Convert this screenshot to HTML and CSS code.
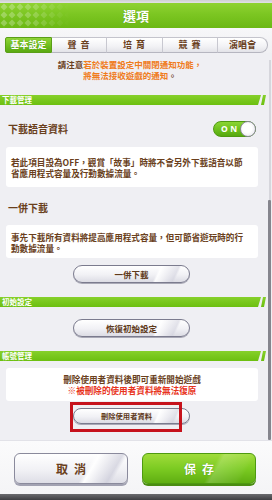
FILE: index.html
```
<!DOCTYPE html>
<html lang="zh-Hant">
<head>
<meta charset="utf-8">
<link rel="stylesheet" href="styles.css">
</head>
<body>
<div class="screen">
  <div class="topstrip"></div>
  <header class="header">
    <svg class="pattern" width="70" height="25" viewBox="0 0 70 25">
      <defs>
        <pattern id="dia" width="8" height="8" patternUnits="userSpaceOnUse">
          <path d="M4 0.5L7.5 4L4 7.5L0.5 4Z" fill="#ffffff" fill-opacity="0.28"/>
        </pattern>
        <linearGradient id="fade" x1="0" x2="1" y1="0" y2="0">
          <stop offset="0" stop-color="#fff"/>
          <stop offset="0.45" stop-color="#fff" stop-opacity="0.8"/>
          <stop offset="1" stop-color="#fff" stop-opacity="0"/>
        </linearGradient>
        <mask id="m">
          <rect width="70" height="25" fill="url(#fade)"/>
        </mask>
      </defs>
      <rect width="70" height="25" fill="url(#dia)" mask="url(#m)"/>
    </svg>
    <h1 class="title">選項</h1>
  </header>
  <div class="tabbar">
    <nav class="tabs">
      <div class="tab tab-active">基本設定</div>
      <div class="tab tab-w1">聲 音</div>
      <div class="tab tab-w2">培 育</div>
      <div class="tab tab-w1">競 賽</div>
      <div class="tab tab-last">演唱會</div>
    </nav>
  </div>
  <main class="content">
    <div class="scroll">
      <p class="notice"><span class="brown">請注意</span>若於裝置設定中關閉通知功能，<br>將無法接收遊戲的通知<span class="brown">。</span></p>

      <div class="bar bar-first"><div class="bar-label">下載管理</div><div class="bar-tick"></div></div>

      <div class="row">
        <div class="heading">下載語音資料</div>
        <div class="toggle"><span class="toggle-text">ON</span><span class="knob"></span></div>
      </div>
      <div class="box box-1">若此項目設為OFF，觀賞「故事」時將不會另外下載語音以節<br>省應用程式容量及行動數據流量。</div>

      <div class="heading heading-2">一併下載</div>
      <div class="box box-2">事先下載所有資料將提高應用程式容量，但可節省遊玩時的行<br>動數據流量。</div>
      <div class="btn btn-1">一併下載</div>

      <div class="bar bar-2"><div class="bar-label">初始設定</div><div class="bar-tick"></div></div>
      <div class="btn btn-2">恢復初始設定</div>

      <div class="bar bar-3"><div class="bar-label">帳號管理</div><div class="bar-tick"></div></div>
      <div class="box box-3"><span class="brown">刪除使用者資料後即可重新開始遊戲</span><br><span class="red">※被刪除的使用者資料將無法復原</span></div>
      <div class="btn btn-3">刪除使用者資料<span class="redmark"></span></div>
    </div>
    <div class="scrollbar"><div class="thumb"></div></div>
  </main>
  <footer class="footer">
    <div class="fbtn fbtn-cancel">取消</div>
    <div class="fbtn fbtn-save">保存</div>
  </footer>
  <div class="bottomstrip"></div>
</div>
</body>
</html>
```
FILE: styles.css
```
* { box-sizing: border-box; }
html, body { margin: 0; padding: 0; }
body {
  width: 272px;
  height: 500px;
  overflow: hidden;
  font-family: "Noto Sans CJK TC", "Noto Sans", sans-serif;
  font-weight: 700;
  background: #f3f3f6;
}
.screen { display: flex; flex-direction: column; width: 272px; height: 500px; }

.topstrip { height: 3px; background: linear-gradient(#cfcfd3, #e2e2e6); }

.header {
  position: relative;
  height: 25px;
  background: linear-gradient(#8fd232 0%, #7cc622 45%, #6bb814 100%);
  display: flex;
  align-items: center;
  justify-content: center;
  overflow: hidden;
}
.pattern { position: absolute; left: 0; top: 0; }
.title {
  margin: 0;
  font-size: 13px;
  line-height: 16px;
  color: #ffffff;
  font-weight: 700;
  text-shadow: 0 0 1px rgba(60, 120, 0, 0.6);
  letter-spacing: 0;
}

.tabbar {
  height: 25px;
  padding-top: 9px;
  background: linear-gradient(#f7f7f9, #f0f0f3);
}
.tabs { display: flex; margin-left: 5px; height: 16px; }
.tab {
  height: 16px;
  display: flex;
  align-items: center;
  justify-content: center;
  font-size: 9px;
  line-height: 12px;
  color: #6a3f1c;
  background: linear-gradient(#ffffff, #f2f2f5 60%, #e3e3e8);
  border-top: 1px solid #c4c4cc;
  border-bottom: 1px solid #b6b6c0;
  border-right: 1px solid #c8c8d0;
  letter-spacing: 1px;
}
.tab-active {
  width: 47px;
  background: linear-gradient(#8fd437, #6fbe1e 55%, #5aa912);
  color: #ffffff;
  border: 1px solid #5a9e18;
  border-radius: 2px 0 0 2px;
  letter-spacing: 0;
  text-shadow: 0 0 1px rgba(40, 90, 0, 0.5);
}
.tab-w1 { width: 55px; }
.tab-w2 { width: 56px; }
.tab-last { width: 50px; border-radius: 0 8px 8px 0; border-right: 1px solid #b6b6c0; letter-spacing: 0; }

.content {
  height: 387px;
  display: flex;
  background: #efeff3;
}
.scroll { width: 266px; display: flex; flex-direction: column; }
.scrollbar {
  width: 6px;
  display: flex;
  flex-direction: column;
  padding: 7px 1px 0 2px;
}
.scrollbar::before {
  content: "";
  display: block;
  height: 140px;
  width: 2px;
  margin-left: 1px;
  background: #d6d6dc;
}
.thumb { flex: 1; width: 3px; background: #85858d; border-radius: 1px; }

.notice {
  margin: 6px 0 0 0;
  text-align: center;
  font-size: 8.5px;
  line-height: 11px;
  color: #f07c1c;
  padding-right: 6px;
}
.brown { color: #6a3f1c; }
.red { color: #e8341c; }

.bar { display: flex; height: 10px; }
.bar-first { margin-top: 14px; }
.bar-2 { margin-top: 14px; }
.bar-3 { margin-top: 14px; }
.bar-label {
  flex: 1;
  background: linear-gradient(#86d02a, #6cbf10);
  clip-path: polygon(0 0, 100% 0, calc(100% - 3px) 100%, 0 100%);
  color: #ffffff;
  font-size: 7.5px;
  line-height: 10px;
  padding-left: 2px;
}
.bar-tick {
  width: 5px;
  background: linear-gradient(#86d02a, #6cbf10);
  clip-path: polygon(2px 0, 5px 0, 3px 100%, 0 100%);
}

.row {
  margin-top: 16px;
  height: 16px;
  display: flex;
  align-items: center;
  justify-content: space-between;
  padding: 0 10px 0 8px;
}
.heading {
  font-size: 10px;
  line-height: 14px;
  color: #6a3f1c;
}
.heading-2 { margin: 14px 0 0 8px; }

.toggle {
  width: 43px;
  height: 16px;
  border-radius: 8px;
  background: linear-gradient(#8ad534, #6cbf1c 55%, #56a80f);
  border: 1px solid #4f9a12;
  display: flex;
  align-items: center;
  justify-content: space-between;
  padding-left: 7px;
}
.toggle-text {
  color: #ffffff;
  font-family: "Noto Sans", sans-serif;
  font-size: 8.5px;
  line-height: 10px;
  letter-spacing: 2.5px;
}
.knob {
  width: 16px;
  height: 16px;
  margin-right: -1px;
  border-radius: 50%;
  background: radial-gradient(circle at 45% 45%, #ffffff 40%, #ececf0 75%, #d6d6dc);
  border: 1px solid #8a8a96;
}

.box {
  margin: 10px 8px 0 6px;
  background: #ffffff;
  border-radius: 3px;
  font-size: 8.6px;
  line-height: 11px;
  color: #6a3f1c;
  white-space: nowrap;
  padding-left: 5px;
}
.box-1 { height: 40px; padding-top: 9.5px; }
.box-2 { margin-top: 10px; height: 33px; padding-top: 7px; }
.box-3 {
  margin-top: 7px;
  height: 33px;
  padding: 6px 0 0 0;
  text-align: center;
  font-size: 8.6px;
  line-height: 11px;
}

.btn {
  position: relative;
  margin-left: 73px;
  width: 117px;
  display: flex;
  align-items: center;
  justify-content: center;
  border: 1px solid #7b7b8e;
  border-radius: 9px;
  background:
    linear-gradient(115deg, transparent 70%, rgba(255,255,255,0.9) 72%, rgba(210,210,222,0.6) 86%, transparent 88%),
    linear-gradient(#ffffff, #f1f1f5 55%, #dcdce4);
  box-shadow: 0 1px 0 #a9a9b6;
  color: #5f3a1a;
  font-size: 8.5px;
  line-height: 12px;
}
.btn-1 { margin-top: 7px; height: 18px; }
.btn-2 { margin-top: 12px; height: 18px; }
.btn-3 { margin-top: 7px; height: 16px; font-size: 7.3px; padding-right: 10px; }
.redmark {
  position: absolute;
  left: -4px;
  top: -7px;
  width: 112px;
  height: 30px;
  border: 3px solid #c6121c;
}

.footer {
  height: 54px;
  background: linear-gradient(#fbfbfc, #f4f4f6);
  border-top: 1px solid #e2e2e8;
  display: flex;
  gap: 14px;
  padding: 12px 0 0 14px;
}
.fbtn {
  width: 114px;
  height: 31px;
  border-radius: 6px;
  display: flex;
  align-items: center;
  justify-content: center;
  font-size: 12px;
  line-height: 14px;
  letter-spacing: 6px;
  padding-left: 6px;
}
.fbtn-cancel {
  color: #6a3f1c;
  border: 1px solid #8a8a9c;
  background:
    linear-gradient(120deg, transparent 62%, rgba(255,255,255,0.95) 66%, rgba(205,205,218,0.7) 84%, transparent 88%),
    linear-gradient(#ffffff, #f1f1f5 55%, #dedee6);
  box-shadow: 0 2px 0 #a2a2b2;
}
.fbtn-save {
  color: #ffffff;
  border: 1px solid #4e9a10;
  background:
    linear-gradient(120deg, transparent 60%, rgba(255,255,255,0.18) 64%, rgba(255,255,255,0.05) 84%, transparent 88%),
    linear-gradient(#a0dc3a, #7ccb22 50%, #5fae12);
  box-shadow: 0 2px 0 #4a8c12;
  text-shadow: 0 0 1px rgba(40, 90, 0, 0.5);
}

.bottomstrip { flex: 1; background: linear-gradient(#6a6a6e, #3e3e42); }
```
